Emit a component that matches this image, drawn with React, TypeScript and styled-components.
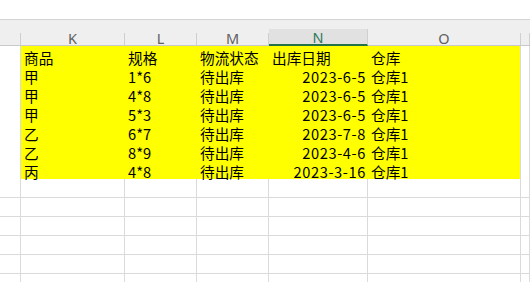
import React from "react";
import styled, { createGlobalStyle, css } from "styled-components";

const GlobalStyle = createGlobalStyle`
  html, body {
    margin: 0;
    padding: 0;
    background: #ffffff;
    overflow: hidden;
  }
  body {
    font-family: "Noto Sans CJK SC", "Noto Sans", sans-serif;
  }
`;

const COLUMNS = "21px 104px 72px 72px 99px 153px 1fr";
const GRID = "#dadada";
const FILL = "#ffff00";

const Window = styled.div`
  width: 530px;
  height: 282px;
  overflow: hidden;
  display: flex;
  flex-direction: column;
  background: #fff;
`;

const FormulaStrip = styled.div`
  height: 19px;
  flex: none;
  background: #ffffff;
`;

const ColumnHeader = styled.div`
  display: grid;
  grid-template-columns: ${COLUMNS};
  height: 25px;
  flex: none;
  background: #efefef;
  border-top: 1px solid #d4d4d4;
  border-bottom: 1px solid #c9c9c9;
`;

const HeaderCell = styled.div<{ $active?: boolean }>`
  align-self: end;
  height: 12px;
  display: flex;
  align-items: flex-end;
  justify-content: center;
  border-right: 1px solid #cfcfcf;
  font-family: "Noto Sans", "Liberation Sans", sans-serif;
  font-size: 14.5px;
  line-height: 12px;
  color: #5f5f5f;
  ${(p) =>
    p.$active &&
    css`
      height: 15px;
      background: #e1e1e1;
      border-bottom: 2px solid #217346;
      color: #2b7a57;
      margin-bottom: -1px;
    `}
  & > span {
    display: block;
    height: 12px;
    transform: translateY(${(p) => (p.$active ? "-1px" : "-1px")});
  }
`;

const Body = styled.div`
  flex: 1;
  display: flex;
  flex-direction: column;
  overflow: hidden;
`;

const Row = styled.div`
  display: grid;
  grid-template-columns: ${COLUMNS};
  height: 19px;
  flex: none;
`;

const RowHead = styled.div`
  background: #ffffff;
  border-right: 1px solid ${GRID};
  border-bottom: 1px solid ${GRID};
`;

const Cell = styled.div<{ $fill?: boolean; $edge?: boolean; $num?: boolean }>`
  box-sizing: border-box;
  display: flex;
  align-items: flex-end;
  justify-content: ${(p) => (p.$num ? "flex-end" : "flex-start")};
  padding: 0 ${(p) => (p.$num ? "1px" : "2px")} 0 3px;
  font-size: 14.67px;
  line-height: 19px;
  letter-spacing: ${(p) => (p.$num ? "0.6px" : "0")};
  color: #000;
  white-space: nowrap;
  overflow: visible;
  background: ${(p) => (p.$fill ? FILL : "#ffffff")};
  border-right: 1px solid ${(p) => (p.$fill && !p.$edge ? FILL : GRID)};
  border-bottom: 1px solid ${(p) => (p.$fill ? FILL : GRID)};
  & > span {
    transform: translateY(2px);
  }
`;

const letters = ["K", "L", "M", "N", "O", ""];

const table: string[][] = [
  ["商品", "规格", "物流状态", "出库日期", "仓库"],
  ["甲", "1*6", "待出库", "2023-6-5", "仓库1"],
  ["甲", "4*8", "待出库", "2023-6-5", "仓库1"],
  ["甲", "5*3", "待出库", "2023-6-5", "仓库1"],
  ["乙", "6*7", "待出库", "2023-7-8", "仓库1"],
  ["乙", "8*9", "待出库", "2023-4-6", "仓库1"],
  ["丙", "4*8", "待出库", "2023-3-16", "仓库1"],
];

const EMPTY_ROWS = 6;

export default function App() {
  return (
    <>
      <GlobalStyle />
      <Window>
        <FormulaStrip />
        <ColumnHeader>
          <HeaderCell />
          {letters.map((l, i) => (
            <HeaderCell key={i} $active={l === "N"}>
              <span>{l}</span>
            </HeaderCell>
          ))}
        </ColumnHeader>
        <Body>
          {table.map((r, ri) => (
            <Row key={ri}>
              <RowHead />
              {r.map((v, ci) => (
                <Cell
                  key={ci}
                  $fill
                  $edge={ci === 4}
                  $num={ci === 3 && ri > 0}
                >
                  <span>{v}</span>
                </Cell>
              ))}
              <Cell />
            </Row>
          ))}
          {Array.from({ length: EMPTY_ROWS }).map((_, ri) => (
            <Row key={`e${ri}`}>
              <RowHead />
              {Array.from({ length: 6 }).map((__, ci) => (
                <Cell key={ci} />
              ))}
            </Row>
          ))}
        </Body>
      </Window>
    </>
  );
}
